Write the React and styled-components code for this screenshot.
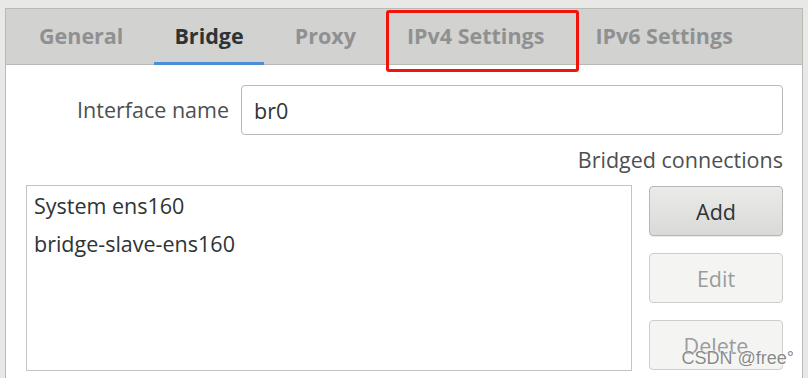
import styled, { createGlobalStyle } from "styled-components";

const GlobalStyle = createGlobalStyle`
  body {
    margin: 0;
    background: #e8e8e7;
    font-family: "Open Sans", "DejaVu Sans", sans-serif;
    overflow: hidden;
  }
`;

const tabs = ["General", "Bridge", "Proxy", "IPv4 Settings", "IPv6 Settings"];
const connections = ["System ens160", "bridge-slave-ens160"];

const App = () => {
  return (
    <Page>
      <GlobalStyle />
      <Notebook>
        <TabBar>
          {tabs.map((tab) => (
            <Tab key={tab} $active={tab === "Bridge"}>
              {tab}
            </Tab>
          ))}
        </TabBar>
        <Content>
          <FieldRow>
            <FieldLabel>Interface name</FieldLabel>
            <TextInput defaultValue="br0" />
          </FieldRow>
          <Caption>Bridged connections</Caption>
          <ListRow>
            <ConnectionList>
              {connections.map((c) => (
                <ConnectionItem key={c}>{c}</ConnectionItem>
              ))}
            </ConnectionList>
            <ButtonColumn>
              <ActionButton>Add</ActionButton>
              <ActionButton disabled>Edit</ActionButton>
              <ActionButton disabled>Delete</ActionButton>
            </ButtonColumn>
          </ListRow>
        </Content>
      </Notebook>
      <Highlight />
      <Watermark>CSDN @free°</Watermark>
    </Page>
  );
};

export default App;

const Page = styled.div`
  position: relative;
  width: 808px;
  height: 378px;
  padding: 8px 5px 0 5px;
  box-sizing: border-box;
`;

const Notebook = styled.div`
  border: 1px solid #b9b9b6;
  background: #ffffff;
`;

const TabBar = styled.div`
  display: flex;
  height: 55px;
  padding-left: 13px;
  gap: 11px;
  background: #d2d2d1;
  border-bottom: 1px solid #b9b9b6;
`;

const Tab = styled.div`
  display: flex;
  align-items: center;
  padding: 0 20px 3px;
  font-size: 21.5px;
  font-weight: 700;
  color: ${(p) => (p.$active ? "#2e3436" : "#8f9191")};
  box-shadow: ${(p) => (p.$active ? "inset 0 -3px 0 #4a90d9" : "none")};
  margin-bottom: -1px;
`;

const Content = styled.div`
  display: flex;
  flex-direction: column;
  padding: 20px 19px 20px 20px;
`;

const FieldRow = styled.div`
  display: flex;
  align-items: center;
  gap: 12px;
`;

const FieldLabel = styled.label`
  width: 203px;
  text-align: right;
  font-size: 21.5px;
  color: #4d5051;
  margin-bottom: 2px;
`;

const TextInput = styled.input`
  flex: 1;
  height: 50px;
  box-sizing: border-box;
  border: 1px solid #b9b9b6;
  border-radius: 4px;
  padding: 0 12px;
  font-family: inherit;
  font-size: 21.5px;
  color: #2e3436;
  outline: none;
`;

const Caption = styled.div`
  margin-top: 13px;
  line-height: 24px;
  text-align: right;
  font-size: 21.5px;
  color: #4d5051;
`;

const ListRow = styled.div`
  display: flex;
  gap: 17px;
  margin-top: 13px;
`;

const ConnectionList = styled.div`
  flex: 1;
  height: 186px;
  box-sizing: border-box;
  border: 1px solid #c4c4c2;
  padding-top: 1px;
`;

const ConnectionItem = styled.div`
  height: 38px;
  line-height: 38px;
  padding-left: 7px;
  font-size: 21.5px;
  color: #2e3436;
`;

const ButtonColumn = styled.div`
  display: flex;
  flex-direction: column;
  gap: 17px;
  width: 134px;
  padding-top: 1px;
`;

const ActionButton = styled.button`
  height: 50px;
  box-sizing: border-box;
  border-radius: 4px;
  border: 1px solid ${(p) => (p.disabled ? "#cfcdcb" : "#b6b6b3")};
  background: ${(p) =>
    p.disabled ? "#f4f4f3" : "linear-gradient(#ebebea, #d9d9d7)"};
  box-shadow: ${(p) => (p.disabled ? "none" : "0 1px 0 rgba(0,0,0,0.08)")};
  font-family: inherit;
  font-size: 21.5px;
  color: ${(p) => (p.disabled ? "#9a9c9d" : "#2e3436")};
`;

const Highlight = styled.div`
  position: absolute;
  left: 386px;
  top: 10px;
  width: 193px;
  height: 62px;
  box-sizing: border-box;
  border: 3px solid #f0140c;
  border-radius: 3px;
`;

const Watermark = styled.div`
  position: absolute;
  right: 14px;
  bottom: 9px;
  font-family: "Liberation Sans", Arial, sans-serif;
  font-size: 18px;
  color: #8a8a8a;
  text-shadow: 0 0 2px #ffffff, 0 0 2px #ffffff;
`;
